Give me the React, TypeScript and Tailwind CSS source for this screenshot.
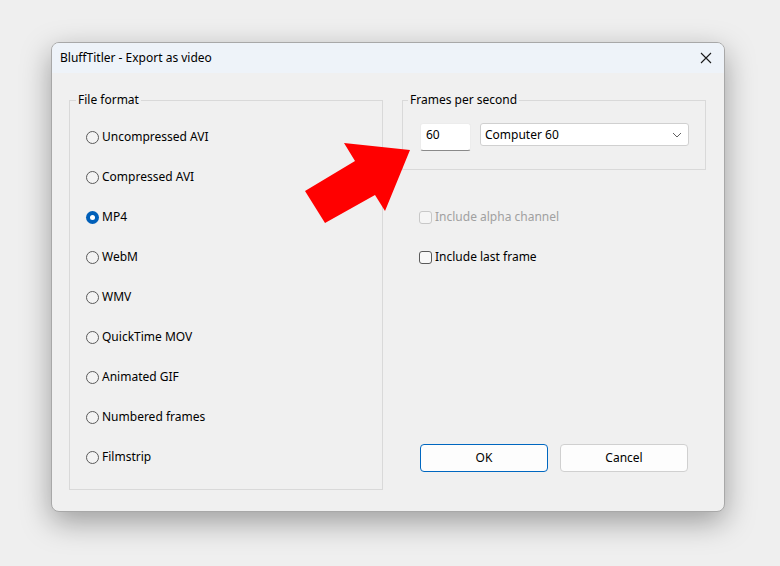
import React from "react";

const font = { fontFamily: '"Segoe UI", "Noto Sans", "Open Sans", sans-serif' };

function Radio({ label, checked }: { label: string; checked?: boolean }) {
  return (
    <div className="flex items-center h-[16px]">
      {checked ? (
        <span className="w-[13px] h-[13px] rounded-full bg-[#005fb8] flex items-center justify-center">
          <span className="w-[5px] h-[5px] rounded-full bg-white" />
        </span>
      ) : (
        <span className="w-[13px] h-[13px] rounded-full border border-[#5a5a5a] bg-[#f3f3f3]" />
      )}
      <span className="ml-[3px] text-[12px] text-black leading-[16px]">{label}</span>
    </div>
  );
}

function Check({ label, disabled }: { label: string; disabled?: boolean }) {
  return (
    <div className="flex items-center h-[16px]">
      <span
        className={
          disabled
            ? "w-[13px] h-[13px] rounded-[3px] border border-[#c8c8c8] bg-[#f5f5f5]"
            : "w-[13px] h-[13px] rounded-[3px] border border-[#5a5a5a] bg-[#f8f8f8]"
        }
      />
      <span className={disabled ? "ml-[3px] text-[12px] text-[#a0a0a0]" : "ml-[3px] text-[12px] text-black"}>
        {label}
      </span>
    </div>
  );
}

export default function App() {
  const formats = [
    "Uncompressed AVI",
    "Compressed AVI",
    "MP4",
    "WebM",
    "WMV",
    "QuickTime MOV",
    "Animated GIF",
    "Numbered frames",
    "Filmstrip",
  ];
  return (
    <div className="w-[780px] h-[566px] bg-[#efefef] relative overflow-hidden" style={font}>
      <div className="absolute left-[51px] top-[42px] w-[674px] h-[470px] rounded-[8px] border border-[#a8a8a8] bg-[#f0f0f0] shadow-[0_10px_30px_rgba(0,0,0,0.35)] flex flex-col overflow-hidden">
        <div className="h-[30px] bg-[#eef3f9] flex items-center justify-between pl-[8px] pr-[10px] shrink-0">
          <span className="text-[12px] text-black">BluffTitler - Export as video</span>
          <svg width="12" height="12" viewBox="0 0 12 12" className="mr-[2px]">
            <path d="M1 1 L11 11 M11 1 L1 11" stroke="#1a1a1a" strokeWidth="1.1" />
          </svg>
        </div>
        <div className="flex-1 flex pl-[17px] pr-[18px] pt-[19px] pb-[21px] gap-[19px]">
          <fieldset className="w-[314px] border border-[#d9d9d9] pl-[16px] pt-[21px] flex flex-col gap-[24px]">
            <legend className="-ml-[10px] px-[2px] text-[12px] text-black leading-[16px]">File format</legend>
            {formats.map((f) => (
              <Radio key={f} label={f} checked={f === "MP4"} />
            ))}
          </fieldset>
          <div className="flex-1 flex flex-col">
            <fieldset className="h-[78px] border border-[#d9d9d9] pl-[17px] pt-[15px]">
              <legend className="-ml-[12px] px-[2px] text-[12px] text-black leading-[16px]">Frames per second</legend>
              <div className="flex items-start gap-[9px]">
                <div className="w-[51px] h-[28px] bg-white border border-[#ececec] border-b-[#8a8a8a] rounded-[3px] px-[5px] pt-[2px] text-[12px] text-black">
                  60
                </div>
                <div className="w-[209px] h-[23px] bg-white border border-[#d0d0d0] rounded-[3px] flex items-center justify-between px-[4px]">
                  <span className="text-[12px] text-black">Computer 60</span>
                  <svg width="10" height="6" viewBox="0 0 10 6" className="mr-[2px]">
                    <path d="M1 1 L5 5 L9 1" fill="none" stroke="#606060" strokeWidth="1" />
                  </svg>
                </div>
              </div>
            </fieldset>
            <div className="ml-[17px] mt-[39px] flex flex-col gap-[24px]">
              <Check label="Include alpha channel" disabled />
              <Check label="Include last frame" />
            </div>
            <div className="flex-1" />
            <div className="flex gap-[12px] ml-[18px] mb-[18px]">
              <button className="w-[128px] h-[28px] rounded-[4px] border border-[#0067c0] bg-[#fdfdfd] text-[12px] text-black">
                OK
              </button>
              <button className="w-[128px] h-[28px] rounded-[4px] border border-[#d0d0d0] bg-[#fdfdfd] text-[12px] text-black">
                Cancel
              </button>
            </div>
          </div>
        </div>
      </div>
      <svg className="absolute left-0 top-0" width="780" height="566" viewBox="0 0 780 566">
        <polygon points="305,191 355,161 344,143 410,150 385,211 375,195 325,223" fill="#ff0000" />
      </svg>
    </div>
  );
}
